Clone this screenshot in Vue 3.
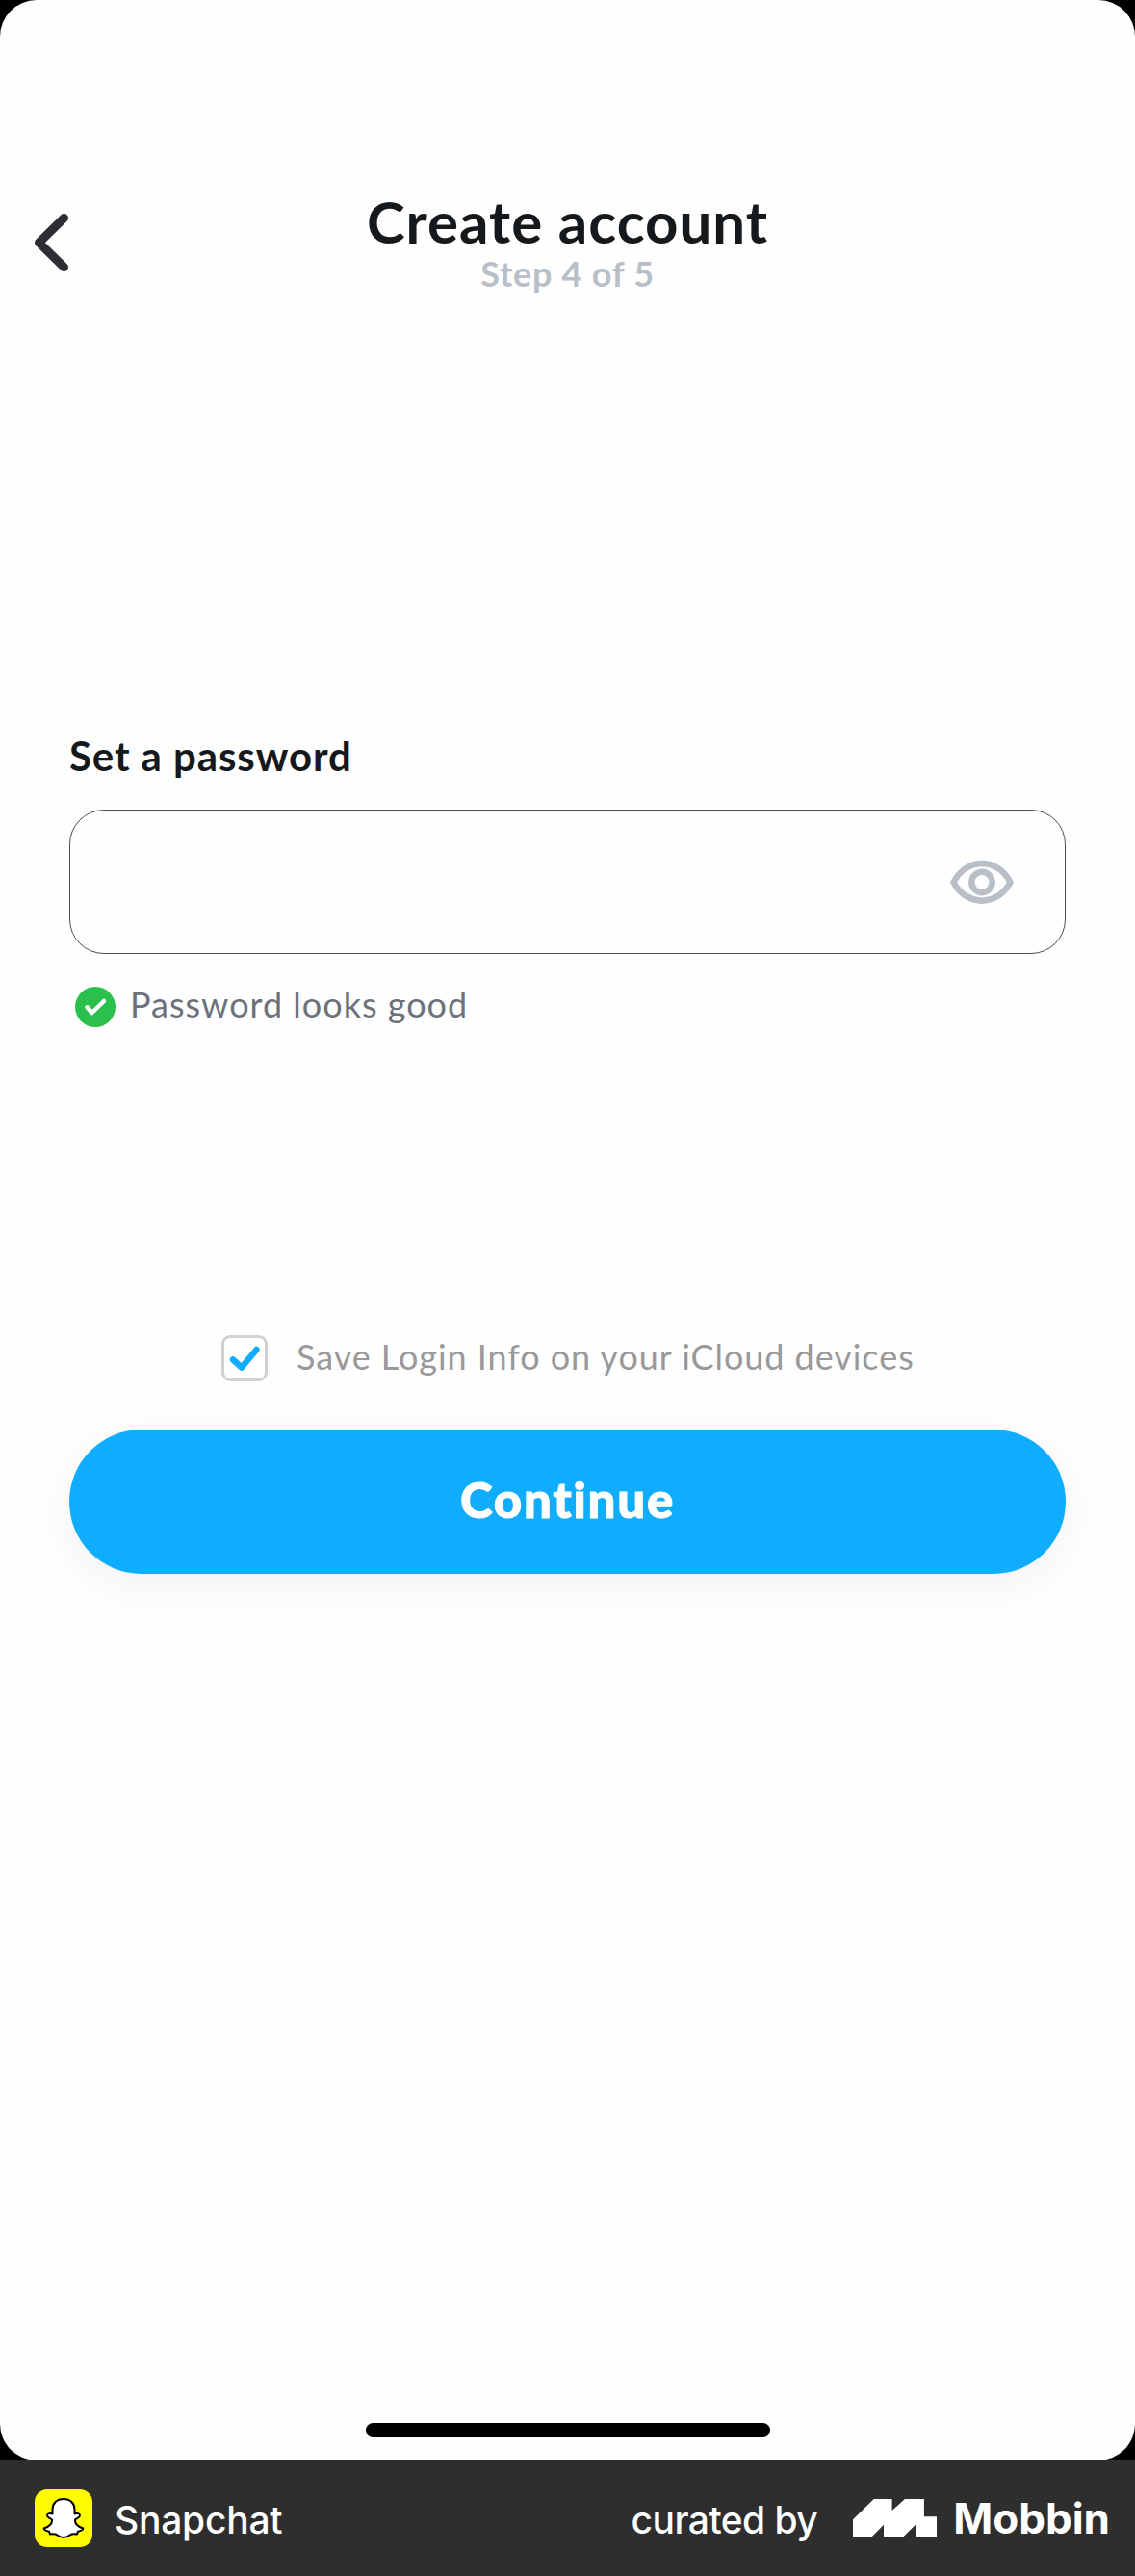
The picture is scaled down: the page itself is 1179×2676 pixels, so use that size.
<script setup>
import { ref } from 'vue'

const saved = ref(true)
const password = ref('')
</script>

<template>
  <div class="page">
    <main class="screen">
      <header class="header">
        <button class="back" aria-label="Back">
          <svg width="36" height="62" viewBox="0 0 36 62"><path d="M30.500 5.500 4.500 31l26 25.500" /></svg>
        </button>
        <div class="heading">
          <h1>Create account</h1>
          <p>Step 4 of 5</p>
        </div>
      </header>

      <section class="form">
        <label class="label" for="password">Set a password</label>
        <div class="field">
          <input id="password" v-model="password" type="password" />
          <svg class="eye" width="66" height="46" viewBox="0 0 66 46">
            <path d="M3.500 23.500C17 -2.500 49 -2.500 62.500 23.500C49 49 17 49 3.500 23.500Z" />
            <circle cx="33" cy="23.500" r="10.700" />
          </svg>
        </div>
        <div class="hint">
          <svg width="42" height="42" viewBox="0 0 42 42">
            <circle cx="21" cy="21" r="21" fill="#2bbf4c" />
            <path d="M12.500 21.300 17.500 27 30 15" />
          </svg>
          <span>Password looks good</span>
        </div>
      </section>

      <div class="save" @click="saved = !saved">
        <span class="box">
          <svg v-if="saved" width="42" height="42" viewBox="0 0 42 42"><path d="M9 22.500 18 30.500 33.500 12" /></svg>
        </span>
        <span>Save Login Info on your iCloud devices</span>
      </div>
      <button class="continue">Continue</button>
      <div class="home"></div>
    </main>

    <footer class="footer">
      <svg class="app" width="60" height="60" viewBox="0 0 60 60">
        <rect width="60" height="60" rx="13" fill="#fffc00" />
        <path d="M30 10C23 10 18.500 14.500 18.500 21V25.500C16 24.500 13 25 13 27C13 29.500 16 29.500 18 31.500C18.500 36 14 39 9.700 40.500C9.700 42.500 12 43 15 43.700L16 46.500C19 46 21.500 46 23.500 47.500C25.500 49 27.500 50 30 50C32.500 50 34.500 49 36.500 47.500C38.500 46 41 46 44 46.500L45 43.700C48 43 50.300 42.500 50.300 40.500C46 39 41.500 36 42 31.500C44 29.500 47 29.500 47 27C47 25 44 24.500 41.500 25.500V21C41.500 14.500 37 10 30 10Z" />
      </svg>
      <span class="name">Snapchat</span>
      <span class="by">curated by</span>
      <svg class="mark" width="87" height="40" viewBox="0 0 87 40">
        <path d="M0 40V21.300L21.700 0H40.600V12L54 0H73.900V18.300H87V40H65V26.700L51.600 40H32V26.700L18.900 40Z" />
      </svg>
      <span class="brand">Mobbin</span>
    </footer>
  </div>
</template>

<style>
body { margin: 0; background: #000; }
</style>

<style scoped>
.page { width: 1179px; height: 2676px; display: flex; flex-direction: column; background: #000; font-family: Lato, "Open Sans", sans-serif; }
.screen { box-sizing: border-box; height: 2556px; padding: 199px 72px 24px; background: #fefefe; border-radius: 38px; display: flex; flex-direction: column; }
button { border: 0; background: none; padding: 0; font-family: inherit; }
.header { display: grid; grid-template-columns: 36px 1fr 36px; margin: 0 -36px; height: 104px; }
.back { height: 62px; margin-top: 22px; }
.back svg { display: block; }
.back path { fill: none; stroke: #2c2e33; stroke-width: 9; stroke-linecap: round; stroke-linejoin: round; }
.heading { text-align: center; padding-top: 1px; }
h1 { margin: 0; font-size: 60px; line-height: 60px; font-weight: 700; letter-spacing: 1px; color: #16191c; }
.heading p { margin: 4px 0 0; font-size: 36px; line-height: 40px; font-weight: 700; letter-spacing: 0.75px; color: #b8bfc6; }
.form { margin-top: 457px; }
.label { display: block; font-size: 42px; line-height: 50px; font-weight: 700; letter-spacing: 0.9px; color: #16191c; }
.field { box-sizing: border-box; margin-top: 31px; height: 150px; border: 1px solid #4a4d50; border-radius: 36px; display: flex; align-items: center; padding: 0 53px 0 36px; }
.field input { flex: 1; border: 0; outline: 0; background: none; height: 100px; font-size: 42px; }
.eye path, .eye circle { fill: none; stroke: #b8bfc6; stroke-width: 6.500; stroke-linejoin: round; }
.hint { display: flex; gap: 15px; margin: 34px 0 0 6px; height: 42px; font-size: 36px; line-height: 36px; letter-spacing: 1px; color: #6b727b; }
.hint path { fill: none; stroke: #fff; stroke-width: 4.500; stroke-linecap: round; stroke-linejoin: round; }
.save { display: flex; gap: 30px; margin: 320px 0 0 158px; height: 48px; font-size: 36px; line-height: 44px; letter-spacing: 0.95px; color: #999; white-space: nowrap; }
.box { box-sizing: border-box; width: 48px; height: 48px; border: 3px solid #cdd2d7; border-radius: 9px; background: #fff; }
.box svg { display: block; }
.box path { fill: none; stroke: #10adff; stroke-width: 6.500; stroke-linecap: round; stroke-linejoin: round; }
.continue { flex: none; margin-top: 50px; height: 150px; border-radius: 75px; background: #10adff; box-shadow: 0 12px 48px rgba(0, 0, 0, 0.05); color: #fff; font-size: 51px; font-weight: 900; letter-spacing: 1.8px; -webkit-text-stroke: 1px #fff; padding-bottom: 6px; }
.home { flex: none; align-self: center; margin-top: auto; width: 420px; height: 15px; border-radius: 8px; background: #000; }
.footer { box-sizing: border-box; height: 120px; padding: 0 26px 0 36px; background: #2e2e2e; color: #fff; display: flex; align-items: center; font-family: Inter, "Liberation Sans", sans-serif; font-size: 39px; line-height: 48px; font-weight: 550; }
.app path { fill: #fff; stroke: #000; stroke-width: 2; stroke-linejoin: round; }
.name { margin-left: 23px; padding-top: 4px; letter-spacing: -0.25px; }
.by { margin-left: auto; padding-top: 4px; letter-spacing: -0.55px; }
.mark { margin-left: 37px; fill: #fff; }
.brand { margin-left: 17px; font-size: 44px; font-weight: 700; }
</style>
